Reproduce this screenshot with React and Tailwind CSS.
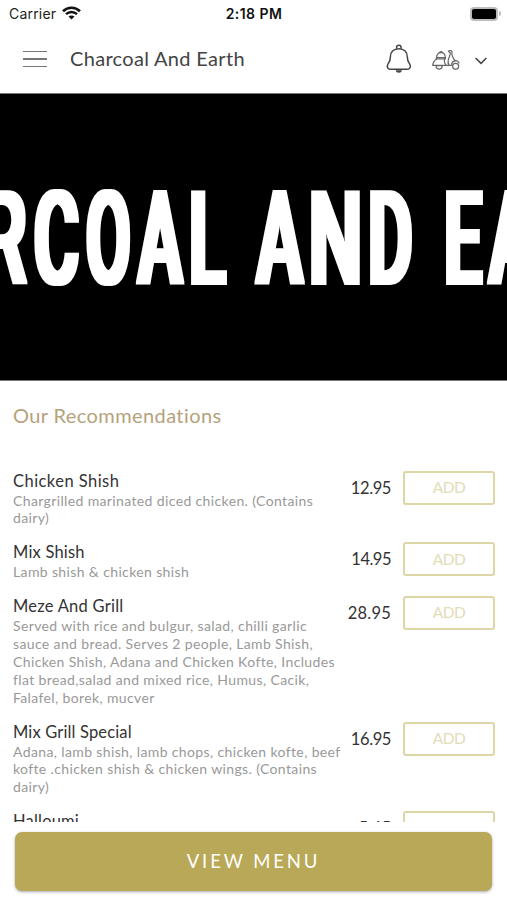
import React from "react";

const MENU_ITEMS = [
  {
    name: "Chicken Shish",
    nameClass: "tracking-[0.45px]",
    desc: "Chargrilled marinated diced chicken. (Contains\ndairy)",
    price: "12.95",
    priceClass: "tracking-[-0.4px]",
  },
  {
    name: "Mix Shish",
    nameClass: "tracking-[0.2px]",
    desc: "Lamb shish & chicken shish",
    price: "14.95",
    priceClass: "tracking-[-0.5px]",
  },
  {
    name: "Meze And Grill",
    nameClass: "tracking-[0.25px]",
    desc: "Served with rice and bulgur, salad, chilli garlic\nsauce and bread. Serves 2 people, Lamb Shish,\nChicken Shish, Adana and Chicken Kofte, Includes\nflat bread,salad and mixed rice, Humus, Cacik,\nFalafel, borek, mucver",
    price: "28.95",
    priceClass: "tracking-[0.2px]",
  },
  {
    name: "Mix Grill Special",
    nameClass: "tracking-[0.15px]",
    desc: "Adana, lamb shish, lamb chops, chicken kofte, beef\nkofte .chicken shish & chicken wings. (Contains\ndairy)",
    price: "16.95",
    priceClass: "tracking-[-0.4px]",
  },
  {
    name: "Halloumi",
    nameClass: "tracking-[0.2px]",
    desc: "Grilled halloumi",
    price: "5.45",
    priceClass: "tracking-[0px]",
  },
];

// left / right edge of every letter on the banner
const BANNER_LETTERS = [
  ["R", -15, 28],
  ["C", 34, 79],
  ["O", 86, 130],
  ["A", 136, 184.5],
  ["L", 191, 227.5],
  ["A", 254.5, 305],
  ["N", 311, 360],
  ["D", 370, 412.5],
  ["E", 446, 483],
  ["A", 487, 536],
];

// ink start / end in em for Roboto Medium
const INK = {
  R: [0.07, 0.615],
  C: [0.045, 0.615],
  O: [0.045, 0.64],
  A: [0.01, 0.655],
  L: [0.07, 0.525],
  N: [0.07, 0.64],
  D: [0.07, 0.61],
  E: [0.07, 0.535],
};

const FONT_SIZE = 129;
const SPREAD = 3;

const StatusBar = () => (
  <div className="flex h-[25px] items-center justify-between pl-[9px] pr-[6px] pt-[2px] font-['Inter',sans-serif] text-[14px] text-[#222]">
    <div className="flex w-[120px] items-center gap-[6px]">
      <span className="tracking-[0.2px]">Carrier</span>
      <svg width="19" height="14" viewBox="0 0 19 14" fill="none" stroke="#111" className="-mt-px">
        <path d="M1 5.2C5.8 .6 13.2 .6 18 5.2" strokeWidth="2.6" />
        <path d="M4 8.2c3.2-3 7.8-3 11 0" strokeWidth="2.4" />
        <path d="M9.500 13.600L6.500 10.600c1.700-1.500 4.300-1.500 6 0z" fill="#111" stroke="none" />
      </svg>
    </div>
    <span className="mr-[2px] font-semibold tracking-[0.45px] text-[#111]">2:18 PM</span>
    <div className="flex w-[120px] items-center justify-end gap-px">
      <div className="h-[14px] w-[28px] rounded-[4px] bg-[#bdbdbd] p-[2px]">
        <div className="h-full w-full rounded-[2px] bg-black" />
      </div>
      <div className="h-[5px] w-[2px] rounded-r-full bg-[#bdbdbd]" />
    </div>
  </div>
);

const BellIcon = () => (
  <svg width="26" height="30" viewBox="20 24 78 90" fill="none" stroke="#444" strokeWidth="4.500" className="-ml-px mr-px">
    <path d="M52 38v-5c0-7 13-7 13 0v5" />
    <path d="M58.500 38C42 38 33 49 33 63c0 12-3 15-7 21-5 9 0 16 9 16h47c9 0 14-7 9-16-4-6-7-9-7-21 0-14-9-25-25.500-25z" />
    <path d="M49 103h19c-1 10-18 10-19 0z" fill="#444" stroke="none" />
  </svg>
);

const ScooterIcon = () => (
  <svg width="28" height="20" viewBox="156 43 84 60" fill="none" stroke="#666" strokeWidth="3.600" strokeLinejoin="round" strokeLinecap="round">
    <path d="M170 66c0-11 5-15 13-15s13 4 13 15" />
    <path d="M179 50c1-3 7-3 8 0" />
    <path d="M169 66h27v4h-27z" />
    <path d="M170 70c-7 4-11 11-12 19h58" />
    <path d="M194 70c-2 7 0 14 5 19" />
    <path d="M168 90c1 14 18 14 19 0z" />
    <path d="M206 47c3-4 10-3 10 2-1 5-1 7 1 12 2 6 6 10 8 15" />
    <path d="M206 47l5 5c-1 9-4 13-6 20-2 7-1 12 2 17" />
    <path d="M215 86c1-12 18-15 22-4" />
    <circle cx="227" cy="92" r="9" />
  </svg>
);

const Header = () => (
  <header className="flex h-[68px] items-center pl-[23px] pr-[20px]">
    <div className="flex w-[24px] flex-col gap-[6px]">
      <div className="h-[1.500px] bg-[#777]" />
      <div className="h-[1.500px] bg-[#777]" />
      <div className="h-[1.500px] bg-[#777]" />
    </div>
    <h1 className="-mt-[2px] ml-[23px] flex-1 text-[20px] leading-6 tracking-[0.32px] text-[#444]">Charcoal And Earth</h1>
    <BellIcon />
    <div className="ml-[19px] mt-[2px]">
      <ScooterIcon />
    </div>
    <svg width="12" height="8" viewBox="0 0 12 8" fill="none" stroke="#444" strokeWidth="1.500" className="ml-[15px] mt-[4px]">
      <path d="M.6 1L6 6.400 11.400 1" />
    </svg>
  </header>
);

const Banner = () => (
  <div className="h-[288px] w-full overflow-hidden border-b border-t border-[#777] bg-black">
    <svg width="507" height="286" viewBox="0 94 507 286">
      <defs>
        <filter id="heavy" x="-10%" y="-10%" width="120%" height="120%">
          <feMorphology operator="dilate" radius="3 1" />
          <feGaussianBlur stdDeviation="0.7" />
        </filter>
      </defs>
      <g filter="url(#heavy)" fill="#fff" fontFamily="Roboto, sans-serif" fontWeight="500" fontSize={FONT_SIZE}>
        {BANNER_LETTERS.map(([ch, left, right], i) => {
          const [a, b] = INK[ch];
          const sx = (right - left - SPREAD * 2) / (FONT_SIZE * (b - a));
          const x = left + SPREAD - a * FONT_SIZE * sx;
          return (
            <text key={i} transform={`translate(${x} 284) scale(${sx} 1)`}>
              {ch}
            </text>
          );
        })}
      </g>
    </svg>
  </div>
);

const MenuRow = ({ item }) => (
  <div className="flex items-start pb-[15.100px]">
    <div className="w-[334px] shrink-0">
      <h3 className={`h-[21px] text-[16.500px] leading-[20px] text-[#333] ${item.nameClass}`}>{item.name}</h3>
      <p className="whitespace-pre text-[14px] leading-[17.850px] tracking-[0.37px] text-[#999]">{item.desc}</p>
    </div>
    <div className={`flex h-[35px] flex-1 items-center justify-end pr-[12px] text-[16.500px] text-[#333] ${item.priceClass}`}>
      {item.price}
    </div>
    <button className="h-[34px] w-[92px] shrink-0 rounded-[3px] border-2 border-[#ddd6a6] text-[15.500px] leading-none tracking-[-0.5px] text-[#e2dcb8]">
      ADD
    </button>
  </div>
);

export default function App() {
  return (
    <div className="flex h-[900px] w-[507px] flex-col overflow-hidden bg-white font-['Lato',sans-serif]">
      <StatusBar />
      <Header />
      <Banner />
      <main className="min-h-0 flex-1 overflow-hidden pl-[13px] pr-[12px]">
        <h2 className="mt-[21px] text-[20px] leading-[26px] tracking-[0.4px] text-[#b5a27c]">Our Recommendations</h2>
        <div className="mt-[42.500px]">
          {MENU_ITEMS.map((item) => (
            <MenuRow key={item.name} item={item} />
          ))}
        </div>
      </main>
      <footer className="h-[78px] shrink-0 px-[15px] pt-[9.500px]">
        <button className="h-[59px] w-full rounded-[7px] bg-[#b8a857] pt-px text-[18.500px] tracking-[2.900px] text-white shadow-[0_1px_3px_rgba(0,0,0,0.35)]">
          VIEW MENU
        </button>
      </footer>
    </div>
  );
}
